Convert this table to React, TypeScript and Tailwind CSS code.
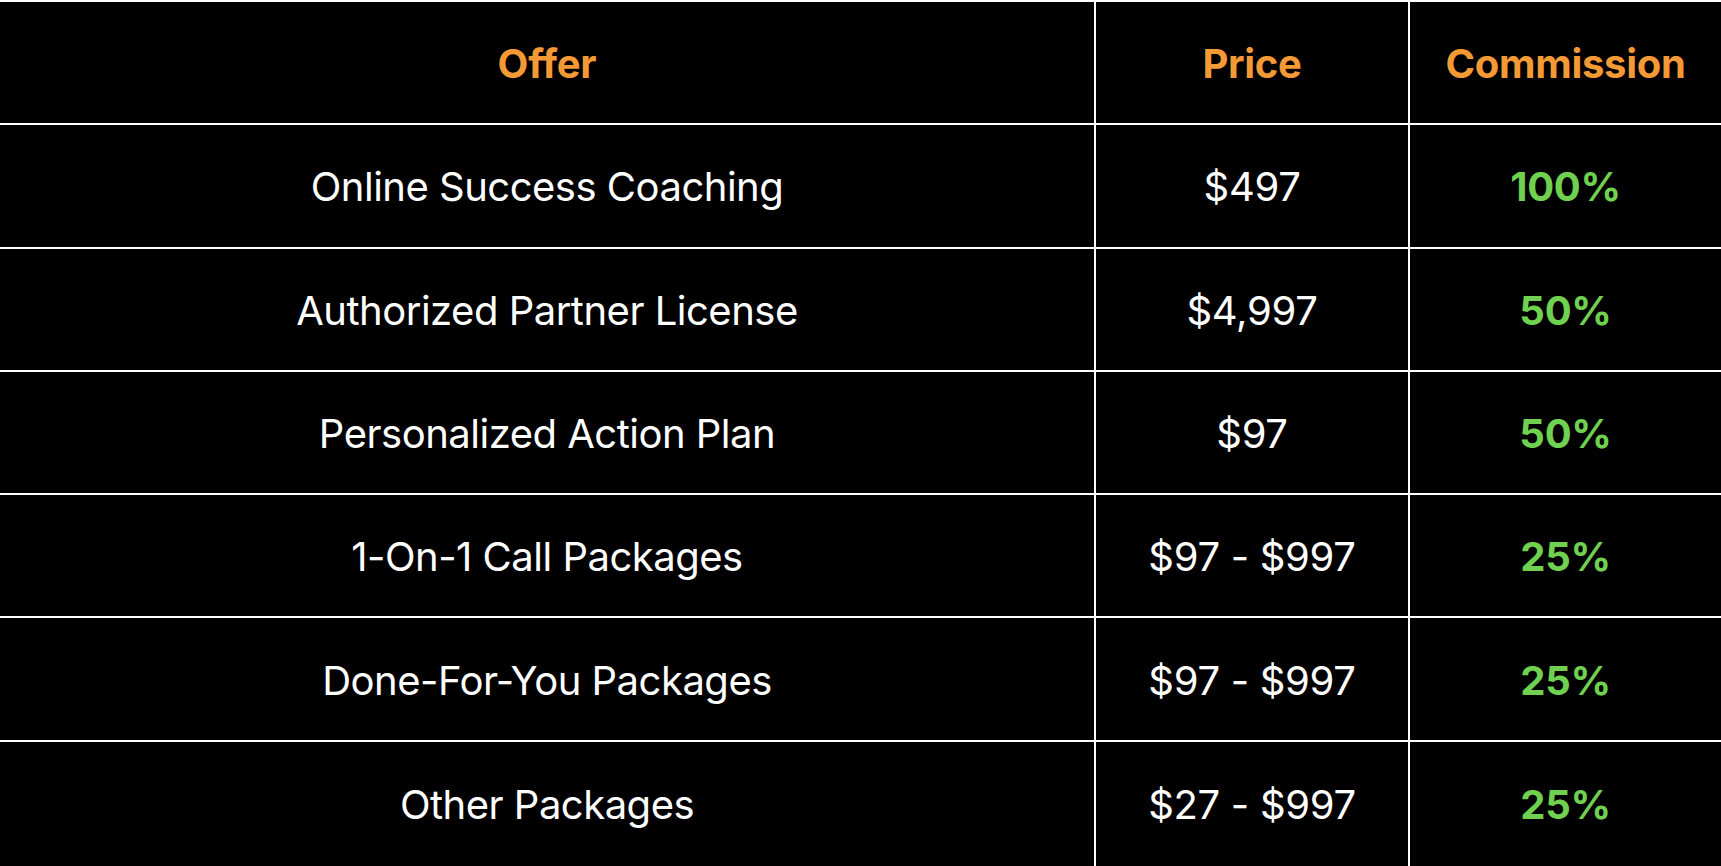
import React from "react";

const rows = [
  ["Online Success Coaching", "$497", "100%"],
  ["Authorized Partner License", "$4,997", "50%"],
  ["Personalized Action Plan", "$97", "50%"],
  ["1-On-1 Call Packages", "$97 - $997", "25%"],
  ["Done-For-You Packages", "$97 - $997", "25%"],
  ["Other Packages", "$27 - $997", "25%"],
];

export default function App() {
  return (
    <div
      className="w-[1721px] h-[866px] overflow-hidden bg-black flex flex-col"
      style={{ fontFamily: "Inter, 'Noto Sans', sans-serif" }}
    >
      <div className="grid grid-cols-[1094px_314px_313px] h-[123.3px] shrink-0 border-t-2 border-white">
        <div className="flex items-center justify-center pt-[3px] text-[40px] font-bold tracking-[-0.3px] text-[#f39a36]">Offer</div>
        <div className="flex items-center justify-center pt-[3px] border-l-2 border-white text-[40px] font-bold tracking-[-0.3px] text-[#f39a36]">Price</div>
        <div className="flex items-center justify-center pt-[3px] border-l-2 border-white text-[40px] font-bold tracking-[-0.3px] text-[#f39a36]">Commission</div>
      </div>
      {rows.map((r, i) => (
        <div
          key={i}
          className={
            i === rows.length - 1
              ? "grid grid-cols-[1094px_314px_313px] flex-1 border-t-2 border-white"
              : "grid grid-cols-[1094px_314px_313px] h-[123.3px] shrink-0 border-t-2 border-white"
          }
        >
          <div className="flex items-center justify-center pt-[3px] text-[40px] tracking-[-0.5px] text-white">{r[0]}</div>
          <div className="flex items-center justify-center pt-[3px] border-l-2 border-white text-[40px] tracking-[-0.3px] text-white">{r[1]}</div>
          <div className="flex items-center justify-center pt-[3px] border-l-2 border-white text-[40px] font-bold tracking-[-0.3px] text-[#6fd14f]">{r[2]}</div>
        </div>
      ))}
    </div>
  );
}
